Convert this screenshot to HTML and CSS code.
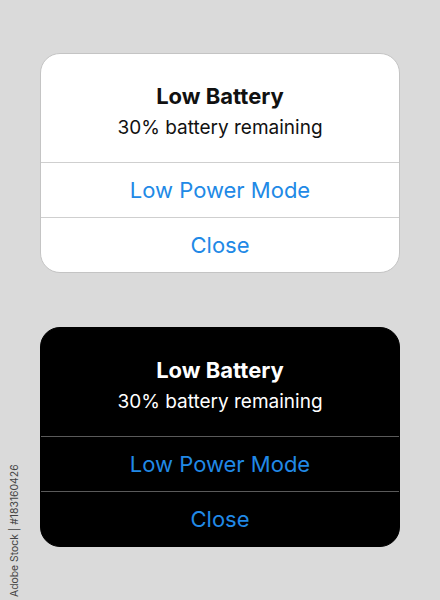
FILE: index.html
```html
<!DOCTYPE html>
<html lang="en">
<head>
  <meta charset="UTF-8">
  <meta name="viewport" content="width=device-width, initial-scale=1.0">
  <title>Low Battery Alerts</title>
  <link rel="stylesheet" href="styles.css">
</head>
<body>

<div class="page">
  <!-- light variant -->
  <div class="alert light">
    <div class="alert-body">
      <h2>Low Battery</h2>
      <p>30% battery remaining</p>
    </div>
    <button class="alert-btn">Low Power Mode</button>
    <button class="alert-btn">Close</button>
  </div>

  <!-- dark variant -->
  <div class="alert dark">
    <div class="alert-body">
      <h2>Low Battery</h2>
      <p>30% battery remaining</p>
    </div>
    <button class="alert-btn">Low Power Mode</button>
    <button class="alert-btn">Close</button>
  </div>
</div>

<div class="credit">Adobe Stock | #183160426</div>

</body>
</html>
```

FILE: styles.css
```css
body {
  margin: 0;
  background: #dadada;
  font-family: Inter, 'Noto Sans', Arial, sans-serif;
  width: 440px;
  height: 600px;
  overflow: hidden;
  position: relative;
}
.page {
  display: flex;
  flex-direction: column;
  gap: 54px;
  padding: 53px 40px 0;
}
.alert {
  border-radius: 20px;
  overflow: hidden;
  display: flex;
  flex-direction: column;
  height: 220px;
  box-sizing: border-box;
}
.alert.light {
  background: #fff;
  border: 1px solid #c4c4c4;
}
.alert.dark {
  background: #000;
  border: 1px solid #000;
}
.alert-body {
  height: 108px;
  box-sizing: border-box;
  padding-top: 28px;
  text-align: center;
}
.alert h2 {
  margin: 0;
  font-size: 22px;
  font-weight: 700;
  line-height: 28px;
}
.alert p {
  margin: 6px 0 0;
  font-size: 19px;
  line-height: 24px;
}
.alert-btn {
  flex: 1;
  border: none;
  border-top: 1px solid #cfcfcf;
  background: none;
  color: #2189e6;
  font-family: inherit;
  font-size: 22px;
  padding: 0;
  cursor: pointer;
}
.light h2, .light p { color: #111; }
.dark h2, .dark p { color: #fff; }
.dark .alert-btn { border-top-color: #5a5a5a; }
.credit {
  position: absolute;
  left: 8px;
  bottom: 3px;
  transform-origin: left bottom;
  transform: rotate(-90deg) translateY(100%);
  font-size: 10.4px;
  color: #444;
  white-space: nowrap;
}
```
